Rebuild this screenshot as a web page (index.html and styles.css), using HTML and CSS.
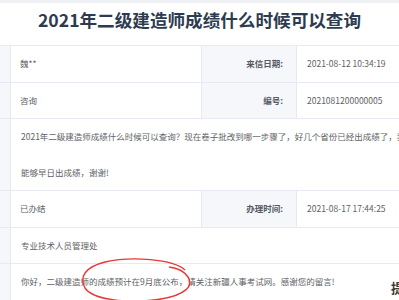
FILE: index.html
```html
<!DOCTYPE html>
<html lang="zh-CN">
<head>
  <meta charset="UTF-8" />
  <meta name="viewport" content="width=device-width, initial-scale=1.0"/>
  <title>留言详情</title>
  <link rel="stylesheet" href="styles.css">
</head>
<body>

  <div class="page">
    <h1 class="title">2021年二级建造师成绩什么时候可以查询</h1>

    <div class="detail">
      <div class="row">
        <div class="label side"></div>
        <div class="value mid">魏**</div>
        <div class="label">来信日期:</div>
        <div class="value">2021-08-12 10:34:19</div>
      </div>
      <div class="row">
        <div class="label side"></div>
        <div class="value mid">咨询</div>
        <div class="label">编号:</div>
        <div class="value">2021081200000005</div>
      </div>
      <div class="row">
        <div class="label side"></div>
        <div class="value wide">2021年二级建造师成绩什么时候可以查询？现在卷子批改到哪一步骤了，好几个省份已经出成绩了，我们新疆什么时候出成绩呢？希望<br>能够早日出成绩，谢谢!</div>
      </div>
      <div class="row">
        <div class="label side"></div>
        <div class="value mid">已办结</div>
        <div class="label">办理时间:</div>
        <div class="value">2021-08-17 17:44:25</div>
      </div>
      <div class="row">
        <div class="label side"></div>
        <div class="value wide">专业技术人员管理处</div>
      </div>
      <div class="row">
        <div class="label side"></div>
        <div class="value wide">你好，二级建造师的成绩预计在9月底公布，请关注新疆人事考试网。感谢您的留言!</div>
      </div>
    </div>

    <!-- hand-drawn mark over the reply -->
    <svg class="mark" width="120" height="50" viewBox="0 0 120 50">
      <path d="M106 13 C94 2 52 -1 26 5 C6 10 0 20 6 31 C14 43 50 47 82 42 C106 38 115 29 109 20 C105 14 98 11 90 10" fill="none" stroke="#e53935" stroke-width="1.4"/>
    </svg>

    <div class="float-tab">提</div>
  </div>

</body>
</html>
```

FILE: styles.css
```css
* { margin: 0; padding: 0; box-sizing: border-box; }

body {
  font-family: "Noto Sans CJK SC", "Noto Sans", sans-serif;
  background: #eef0f3;
  color: #606266;
  overflow: hidden;
  height: 300px;
}

.page {
  position: relative;
  margin-top: 3px;
  background: #fff;
  height: 297px;
}

.title {
  height: 42px;
  padding-top: 4px;
  font-size: 17.6px;
  line-height: 26px;
  font-weight: bold;
  color: #2d3b50;
  text-align: center;
}

.detail {
  width: 620px;
  border-top: 1px solid #e6eaf2;
  font-size: 8.5px;
}

.row {
  display: grid;
  grid-template-columns: 11px 190px 96px 1fr;
  border-bottom: 1px solid #e6eaf2;
}

.label {
  background: #f5f7fa;
  border-right: 1px solid #e6eaf2;
  border-left: 1px solid #e6eaf2;
  font-weight: bold;
  color: #555a63;
  text-align: right;
  padding-right: 13px;
  line-height: 35.5px;
}

.label.side {
  border-left: none;
  padding-right: 0;
}

.value {
  padding-left: 10px;
  line-height: 35.5px;
  white-space: nowrap;
}

.value.mid { padding-left: 9px; }

.value.wide { grid-column: 2 / 5; }

.mark {
  position: absolute;
  left: 79px;
  top: 254px;
}

.float-tab {
  position: absolute;
  left: 391px;
  top: 275px;
  font-size: 13px;
  font-weight: bold;
  color: #3a3a3a;
}
```
